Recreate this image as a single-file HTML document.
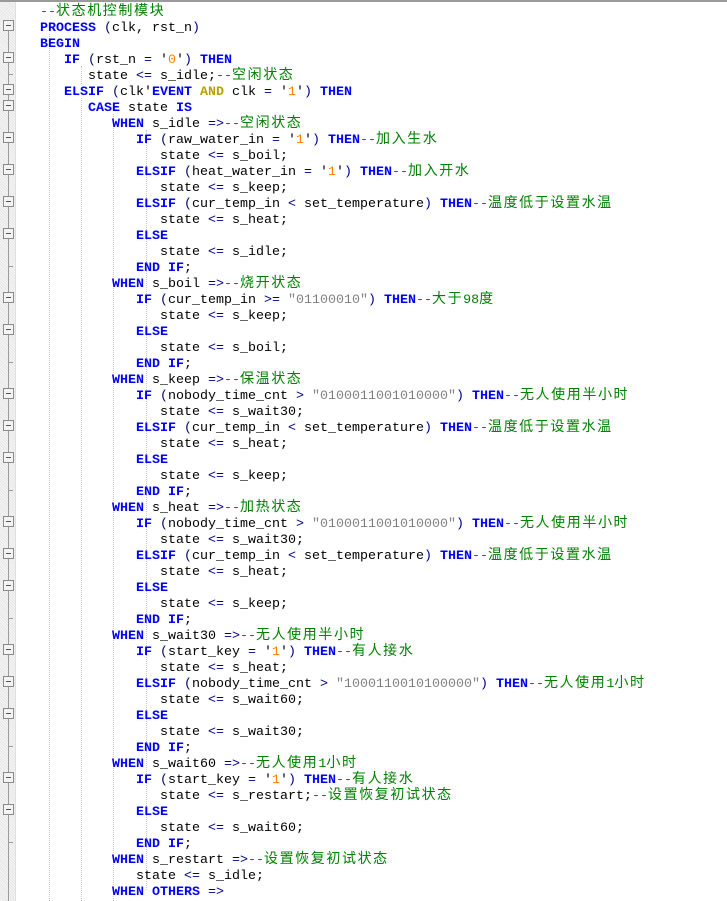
<!DOCTYPE html>
<html><head><meta charset="utf-8"><style>
html,body{margin:0;padding:0;background:#fff;width:727px;height:901px;overflow:hidden;position:relative}
.top{position:absolute;left:0;top:0;width:727px;height:2px;background:#9a9a9a}
.strip{position:absolute;left:0;top:2px;width:15px;height:899px;background:repeating-linear-gradient(45deg,#e6e6e6 0 1px,#f6f6f6 1px 2px);border-right:1px solid #e0e0e0}
.vl{position:absolute;left:8px;top:26px;width:1px;height:875px;background:#9c9c9c}
.box{position:absolute;left:3px;width:9px;height:9px;border:1px solid #8a8a8a;background:#f4f4f4}
.box:after{content:"";position:absolute;left:2px;top:4px;width:5px;height:1px;background:#555}
.tick{position:absolute;left:8px;width:5px;height:1px;background:#9c9c9c}
.g{position:absolute;width:0;border-left:1px dotted #c8c8c8}
.l{position:absolute;left:0;height:16px;line-height:16px;white-space:pre;font-family:"Liberation Mono",monospace;font-size:13.33px;color:#000;overflow:visible}
.l span{line-height:0}
.k{color:#0000ff;font-weight:bold}
.o{color:#000080}
.s{color:#808080}
.n{color:#ff8000}
.c{color:#008000;font-family:"Liberation Mono","Noto Sans CJK SC",monospace}
.z{font-family:"Noto Sans CJK SC",sans-serif;font-size:14px;letter-spacing:1.6px}
</style></head><body>
<div class="top"></div>
<div class="strip"></div>
<div class="vl"></div>
<div class="g" style="left:49px;top:34px;height:867px"></div>
<div class="g" style="left:81px;top:66px;height:18px"></div>
<div class="g" style="left:81px;top:98px;height:803px"></div>
<div class="g" style="left:113px;top:114px;height:787px"></div>
<div class="g" style="left:146px;top:130px;height:760px"></div>
<div id="ln"></div>
<script>
var L=[
[0,'<span class="c">--<span class="z">状态机控制模块</span></span>'],
[0,'<span class="k">PROCESS</span> <span class="o">(</span>clk, rst_n<span class="o">)</span>',1],
[0,'<span class="k">BEGIN</span>'],
[1,'<span class="k">IF</span> <span class="o">(</span>rst_n <span class="o">=</span> \'<span class="n">0</span>\'<span class="o">)</span> <span class="k">THEN</span>',1],
[2,'state <span class="o">&lt;=</span> s_idle;<span class="c">--<span class="z">空闲状态</span></span>',2],
[1,'<span class="k">ELSIF</span> <span class="o">(</span>clk\'<span class="k">EVENT</span> <span class="k" style="color:#b8a000">AND</span> clk <span class="o">=</span> \'<span class="n">1</span>\'<span class="o">)</span> <span class="k">THEN</span>',1],
[2,'<span class="k">CASE</span> state <span class="k">IS</span>',1],
[3,'<span class="k">WHEN</span> s_idle <span class="o">=&gt;</span><span class="c">--<span class="z">空闲状态</span></span>'],
[4,'<span class="k">IF</span> <span class="o">(</span>raw_water_in <span class="o">=</span> \'<span class="n">1</span>\'<span class="o">)</span> <span class="k">THEN</span><span class="c">--<span class="z">加入生水</span></span>',1],
[5,'state <span class="o">&lt;=</span> s_boil;'],
[4,'<span class="k">ELSIF</span> <span class="o">(</span>heat_water_in <span class="o">=</span> \'<span class="n">1</span>\'<span class="o">)</span> <span class="k">THEN</span><span class="c">--<span class="z">加入开水</span></span>',1],
[5,'state <span class="o">&lt;=</span> s_keep;'],
[4,'<span class="k">ELSIF</span> <span class="o">(</span>cur_temp_in <span class="o">&lt;</span> set_temperature<span class="o">)</span> <span class="k">THEN</span><span class="c">--<span class="z">温度低于设置水温</span></span>',1],
[5,'state <span class="o">&lt;=</span> s_heat;'],
[4,'<span class="k">ELSE</span>',1],
[5,'state <span class="o">&lt;=</span> s_idle;'],
[4,'<span class="k">END IF</span>;',2],
[3,'<span class="k">WHEN</span> s_boil <span class="o">=&gt;</span><span class="c">--<span class="z">烧开状态</span></span>'],
[4,'<span class="k">IF</span> <span class="o">(</span>cur_temp_in <span class="o">&gt;=</span> <span class="s">"01100010"</span><span class="o">)</span> <span class="k">THEN</span><span class="c">--<span class="z">大于</span>98<span class="z">度</span></span>',1],
[5,'state <span class="o">&lt;=</span> s_keep;'],
[4,'<span class="k">ELSE</span>',1],
[5,'state <span class="o">&lt;=</span> s_boil;'],
[4,'<span class="k">END IF</span>;',2],
[3,'<span class="k">WHEN</span> s_keep <span class="o">=&gt;</span><span class="c">--<span class="z">保温状态</span></span>'],
[4,'<span class="k">IF</span> <span class="o">(</span>nobody_time_cnt <span class="o">&gt;</span> <span class="s">"0100011001010000"</span><span class="o">)</span> <span class="k">THEN</span><span class="c">--<span class="z">无人使用半小时</span></span>',1],
[5,'state <span class="o">&lt;=</span> s_wait30;'],
[4,'<span class="k">ELSIF</span> <span class="o">(</span>cur_temp_in <span class="o">&lt;</span> set_temperature<span class="o">)</span> <span class="k">THEN</span><span class="c">--<span class="z">温度低于设置水温</span></span>',1],
[5,'state <span class="o">&lt;=</span> s_heat;'],
[4,'<span class="k">ELSE</span>',1],
[5,'state <span class="o">&lt;=</span> s_keep;'],
[4,'<span class="k">END IF</span>;',2],
[3,'<span class="k">WHEN</span> s_heat <span class="o">=&gt;</span><span class="c">--<span class="z">加热状态</span></span>'],
[4,'<span class="k">IF</span> <span class="o">(</span>nobody_time_cnt <span class="o">&gt;</span> <span class="s">"0100011001010000"</span><span class="o">)</span> <span class="k">THEN</span><span class="c">--<span class="z">无人使用半小时</span></span>',1],
[5,'state <span class="o">&lt;=</span> s_wait30;'],
[4,'<span class="k">ELSIF</span> <span class="o">(</span>cur_temp_in <span class="o">&lt;</span> set_temperature<span class="o">)</span> <span class="k">THEN</span><span class="c">--<span class="z">温度低于设置水温</span></span>',1],
[5,'state <span class="o">&lt;=</span> s_heat;'],
[4,'<span class="k">ELSE</span>',1],
[5,'state <span class="o">&lt;=</span> s_keep;'],
[4,'<span class="k">END IF</span>;',2],
[3,'<span class="k">WHEN</span> s_wait30 <span class="o">=&gt;</span><span class="c">--<span class="z">无人使用半小时</span></span>'],
[4,'<span class="k">IF</span> <span class="o">(</span>start_key <span class="o">=</span> \'<span class="n">1</span>\'<span class="o">)</span> <span class="k">THEN</span><span class="c">--<span class="z">有人接水</span></span>',1],
[5,'state <span class="o">&lt;=</span> s_heat;'],
[4,'<span class="k">ELSIF</span> <span class="o">(</span>nobody_time_cnt <span class="o">&gt;</span> <span class="s">"1000110010100000"</span><span class="o">)</span> <span class="k">THEN</span><span class="c">--<span class="z">无人使用</span>1<span class="z">小时</span></span>',1],
[5,'state <span class="o">&lt;=</span> s_wait60;'],
[4,'<span class="k">ELSE</span>',1],
[5,'state <span class="o">&lt;=</span> s_wait30;'],
[4,'<span class="k">END IF</span>;',2],
[3,'<span class="k">WHEN</span> s_wait60 <span class="o">=&gt;</span><span class="c">--<span class="z">无人使用</span>1<span class="z">小时</span></span>'],
[4,'<span class="k">IF</span> <span class="o">(</span>start_key <span class="o">=</span> \'<span class="n">1</span>\'<span class="o">)</span> <span class="k">THEN</span><span class="c">--<span class="z">有人接水</span></span>',1],
[5,'state <span class="o">&lt;=</span> s_restart;<span class="c">--<span class="z">设置恢复初试状态</span></span>'],
[4,'<span class="k">ELSE</span>',1],
[5,'state <span class="o">&lt;=</span> s_wait60;'],
[4,'<span class="k">END IF</span>;',2],
[3,'<span class="k">WHEN</span> s_restart <span class="o">=&gt;</span><span class="c">--<span class="z">设置恢复初试状态</span></span>'],
[4,'state <span class="o">&lt;=</span> s_idle;'],
[3,'<span class="k">WHEN</span> <span class="k">OTHERS</span> <span class="o">=&gt;</span>']
];
var h='';
for(var i=0;i<L.length;i++){var t=2+16*i;
h+='<div class="l" style="top:'+(t+3)+'px;left:'+(40+24*L[i][0])+'px">'+L[i][1]+'</div>';
if(L[i][2]==1)h+='<div class="box" style="top:'+(t+2)+'px"></div>';
if(L[i][2]==2)h+='<div class="tick" style="top:'+(t+8)+'px"></div>';}
document.getElementById('ln').innerHTML=h;
</script>
</body></html>
